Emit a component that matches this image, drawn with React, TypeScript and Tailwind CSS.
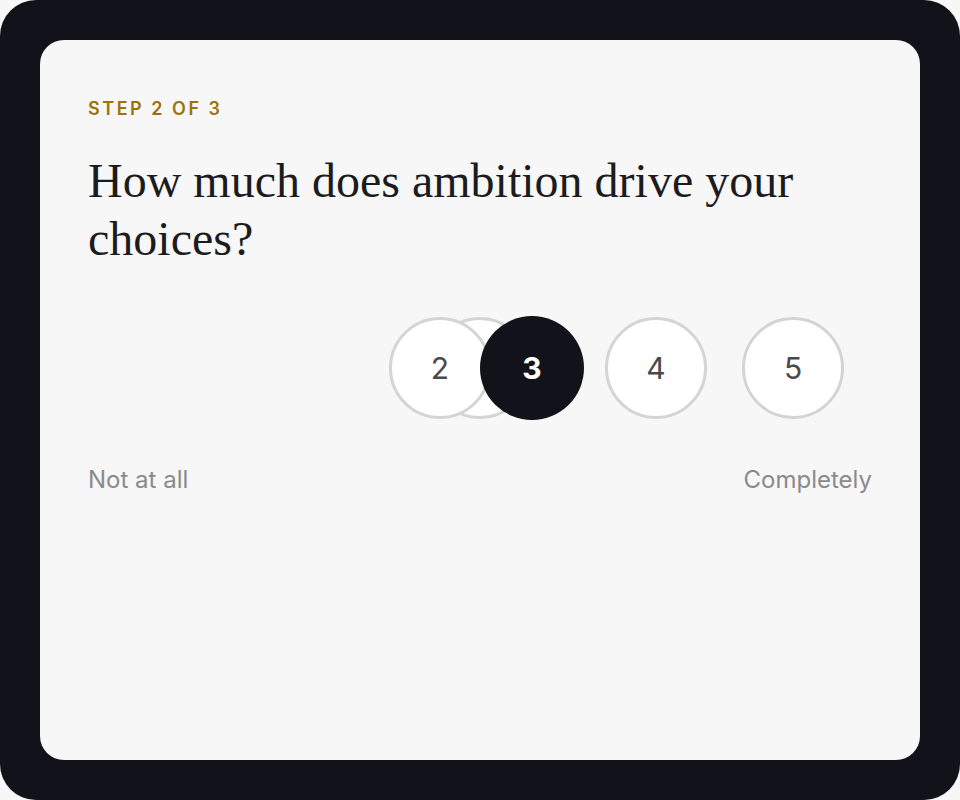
const options = [
  { n: 2, ml: "ml-[301px]" },
  { n: 1, ml: "-ml-[62px]", hidden: true },
  { n: 3, ml: "-ml-[51px]", active: true },
  { n: 4, ml: "ml-[21px]" },
  { n: 5, ml: "ml-[35px]" },
];

export default function App() {
  return (
    <div className="w-[960px] h-[800px] bg-[#f7f7f7]">
      <div className="w-full h-full rounded-[36px] bg-[#12131a] p-10">
        <div className="w-full h-full rounded-[24px] bg-[#f7f7f7] px-12 pt-[60px] font-['Inter',sans-serif] flex flex-col">
          {/* step label */}
          <p className="text-[18px] font-semibold tracking-[0.14em] text-[#9c720b] leading-none">
            STEP 2 OF 3
          </p>

          <h1 className="mt-[34px] font-['Liberation_Serif',serif] text-[48px] leading-[58px] text-[#1c1c1e] max-w-[740px]">
            How much does ambition drive your choices?
          </h1>

          {/* scale */}
          <div className="mt-[47px] flex items-center h-[106px]">
            {options.map((o) =>
              o.active ? (
                <div
                  key={o.n}
                  className={`${o.ml} relative z-10 w-[104px] h-[104px] rounded-full bg-[#12131a] flex items-center justify-center text-white text-[30px] font-bold`}
                >
                  {o.n}
                </div>
              ) : (
                <div
                  key={o.n}
                  className={`${o.ml} w-[102px] h-[102px] rounded-full bg-white border-[3px] border-[#d4d4d4] flex items-center justify-center text-[#4a4a4a] text-[30px] ${o.hidden ? "text-transparent" : "relative z-[1]"}`}
                >
                  {o.n}
                </div>
              )
            )}
          </div>

          <div className="mt-[47px] flex justify-between text-[24px] text-[#8a8a8a] leading-none">
            <span>Not at all</span>
            <span>Completely</span>
          </div>
        </div>
      </div>
    </div>
  );
}
